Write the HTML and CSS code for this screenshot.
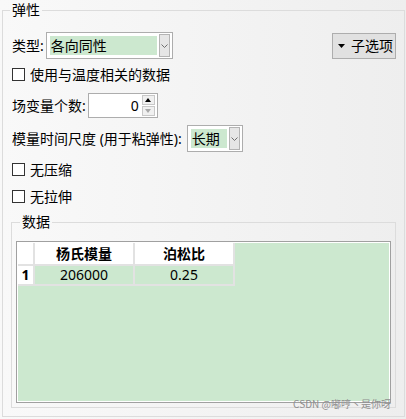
FILE: index.html
```html
<!DOCTYPE html>
<html lang="zh-CN">
<head>
<meta charset="utf-8">
<title>弹性</title>
<link rel="stylesheet" href="styles.css">
</head>
<body>
<div class="panel">
  <fieldset class="group">
    <legend class="group-title">弹性</legend>

    <div class="row row-type">
      <span class="label">类型:</span>
      <div class="combo combo-type">
        <span class="combo-value">各向同性</span>
        <span class="combo-btn"><svg width="7" height="4" viewBox="0 0 7 4"><polyline points="0.5,0.5 3.5,3.5 6.5,0.5" fill="none" stroke="#6f6f6f" stroke-width="1"/></svg></span>
      </div>
      <button class="sub-btn"><svg class="tri" width="7" height="4" viewBox="0 0 7 4"><polygon points="0,0 7,0 3.5,4" fill="#000"/></svg><span class="sub-text">子选项</span></button>
    </div>

    <label class="row check-row row-temp"><span class="box"></span><span>使用与温度相关的数据</span></label>

    <div class="row row-field">
      <span class="label">场变量个数:</span>
      <div class="spin">
        <span class="spin-value">0</span>
        <span class="spin-btns">
          <span class="spin-up"><span class="arrow-up"></span></span>
          <span class="spin-down"><span class="arrow-down"></span></span>
        </span>
      </div>
    </div>

    <div class="row row-scale">
      <span class="label label-scale">模量时间尺度 (用于粘弹性):</span>
      <div class="combo combo-scale">
        <span class="combo-value">长期</span>
        <span class="combo-btn"><svg width="7" height="4" viewBox="0 0 7 4"><polyline points="0.5,0.5 3.5,3.5 6.5,0.5" fill="none" stroke="#6f6f6f" stroke-width="1"/></svg></span>
      </div>
    </div>

    <label class="row check-row row-nocomp"><span class="box"></span><span>无压缩</span></label>
    <label class="row check-row row-notens"><span class="box"></span><span>无拉伸</span></label>

    <fieldset class="data-group">
      <legend class="data-title">数据</legend>
      <div class="table-frame">
        <div class="table-inner">
          <div class="grid">
            <div class="corner"></div>
            <div class="hcell">杨氏模量</div>
            <div class="hcell">泊松比</div>
            <div class="rhead">1</div>
            <div class="cell">206000</div>
            <div class="cell">0.25</div>
          </div>
        </div>
      </div>
    </fieldset>
  </fieldset>
  <div class="watermark">CSDN @嘟哼丶是你呀</div>
</div>
</body>
</html>
```

FILE: styles.css
```css
* { box-sizing: border-box; }
html, body { margin: 0; padding: 0; }
body {
  width: 406px;
  height: 419px;
  overflow: hidden;
  font-family: "Noto Sans", "Noto Sans CJK SC", sans-serif;
  font-size: 14px;
  color: #000;
  background: linear-gradient(to right, #f9f9f9, #eeeeee);
}
.panel {
  position: relative;
  width: 406px;
  height: 419px;
  padding-left: 2px;
}
.group {
  margin: 0;
  width: 403px;
  min-width: 0;
  border: 1px solid #dcdcdc;
  padding: 12px 8px 8px 9px;
}
.group-title {
  margin-left: -2px;
  padding: 0 2px;
  height: 20px;
  line-height: 20px;
}
.row { display: flex; align-items: center; }
.label { white-space: nowrap; line-height: 20px; margin-right: 2px; }
.label-scale { margin-right: 5px; }

.row-type { height: 27px; }
.combo {
  display: flex;
  align-items: center;
  height: 27px;
  border: 1px solid #adadad;
  background: #fff;
  padding: 3px 2px 3px 3px;
  gap: 2px;
  flex-shrink: 0;
}
.combo-type { width: 127px; }
.combo-scale { width: 56px; }
.combo-value {
  flex: 1;
  height: 19px;
  line-height: 19px;
  background: #cce8cf;
  padding-left: 1px;
  white-space: nowrap;
  overflow: hidden;
}
.combo-btn {
  width: 11px;
  height: 23px;
  border: 1px solid #b4b4b4;
  background: #e6e6e6;
  display: flex;
  align-items: center;
  justify-content: center;
}
.sub-btn {
  margin-left: auto;
  align-self: flex-start;
  margin-top: 1px;
  width: 64px;
  height: 26px;
  flex-shrink: 0;
  border: 1px solid #adadad;
  background: #e1e1e1;
  padding: 0 0 0 5px;
  display: flex;
  align-items: center;
  gap: 6px;
  font: inherit;
  color: #000;
  line-height: 20px;
  white-space: nowrap;
}
.tri { flex-shrink: 0; display: block; }
.sub-text { white-space: nowrap; }

.check-row { height: 19px; gap: 5px; line-height: 19px; }
.box {
  width: 13px;
  height: 13px;
  border: 1px solid #333;
  background: #fff;
}
.row-temp { margin-top: 6px; }
.row-field { margin-top: 9px; height: 25px; }
.spin {
  width: 70px;
  height: 25px;
  border: 1px solid #adadad;
  background: #fff;
  display: flex;
  align-items: center;
  padding: 1px 2px 1px 2px;
}
.spin-value { flex: 1; text-align: right; padding-right: 3px; line-height: 20px; }
.spin-btns {
  width: 13px;
  height: 21px;
  display: flex;
  flex-direction: column;
  gap: 1px;
}
.spin-up, .spin-down {
  flex: 1;
  border: 1px solid #c8c8c8;
  background: #f0f0f0;
  display: flex;
  align-items: center;
  justify-content: center;
}
.arrow-up {
  width: 0; height: 0;
  border-left: 3px solid transparent;
  border-right: 3px solid transparent;
  border-bottom: 4px solid #000;
}
.arrow-down {
  width: 0; height: 0;
  border-left: 3px solid transparent;
  border-right: 3px solid transparent;
  border-top: 4px solid #a8a8a8;
}
.row-scale { margin-top: 7px; height: 27px; }
.row-nocomp { margin-top: 8px; }
.row-notens { margin-top: 8px; }

.data-group {
  margin: 6px 0 0 -1px;
  width: 385px;
  min-width: 0;
  border: 1px solid #dcdcdc;
  padding: 9px 4px 4px 4px;
}
.data-title {
  margin-left: 4px;
  padding: 0 2px;
  height: 20px;
  line-height: 20px;
}
.table-frame {
  height: 162px;
  border: 1px solid #a0a0a0;
  padding: 1px;
  background: #fff;
}
.table-inner {
  height: 100%;
  background: #cce8cf;
}
.grid {
  display: grid;
  grid-template-columns: 17px 100px 100px;
  grid-template-rows: 23px 20px;
}
.grid > div {
  border-right: 2px solid #e2e2e2;
  border-bottom: 2px solid #e2e2e2;
  display: flex;
  align-items: center;
  justify-content: center;
  line-height: 18px;
}
.corner, .hcell, .rhead { background: #fff; }
.hcell, .rhead { font-weight: bold; }

.watermark {
  position: absolute;
  right: 15px;
  top: 397px;
  font-size: 10px;
  line-height: 14px;
  color: #8e8e8e;
  white-space: nowrap;
  font-family: "Noto Sans CJK SC", sans-serif;
}
```
